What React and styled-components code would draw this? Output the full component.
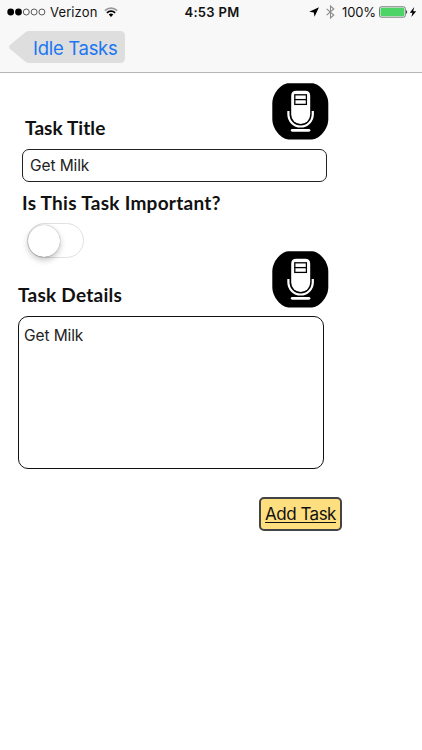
import React, { useState } from 'react'
import styled, { createGlobalStyle } from 'styled-components'

const App = () => {
  const [title, setTitle] = useState('Get Milk')
  const [details, setDetails] = useState('Get Milk')
  const [important, setImportant] = useState(false)

  return (
    <>
      <GlobalStyle />
      <Screen>
        <Header>
          <StatusBar>
            <Carrier>
              <SignalDots />
              <StatusText $spacing='0.12px'>Verizon</StatusText>
              <WifiIcon />
            </Carrier>
            <StatusText $bold $spacing='0.32px'>4:53 PM</StatusText>
            <Indicators>
              <LocationIcon />
              <BluetoothIcon />
              <StatusText $spacing='-0.1px'>100%</StatusText>
              <BatteryIcon />
            </Indicators>
          </StatusBar>
          <BackButton>
            <BackShape />
            <span>Idle Tasks</span>
          </BackButton>
        </Header>
        <Form>
          <LabelRow>
            <Label $left='25px'>Task Title</Label>
            <MicButton />
          </LabelRow>
          <TitleInput value={title} onChange={(e) => setTitle(e.target.value)} />
          <Label as='p' $left='22px' $top='8px' $spacing='0.28px'>Is This Task Important?</Label>
          <Switch $on={important} onClick={() => setImportant(!important)}>
            <Knob />
          </Switch>
          <LabelRow $top='-8px'>
            <Label $left='18px' $bottom='1px' $spacing='0.25px'>Task Details</Label>
            <MicButton />
          </LabelRow>
          <DetailsInput value={details} onChange={(e) => setDetails(e.target.value)} />
          <AddButton>Add Task</AddButton>
        </Form>
      </Screen>
    </>
  )
}

const SignalDots = () => (
  <svg width='39' height='8' viewBox='0 0 39 8'>
    <circle cx='3.7' cy='4' r='3.4' />
    <circle cx='11.5' cy='4' r='3.4' />
    {[19.3, 27.1, 34.9].map((x) => (
      <circle key={x} cx={x} cy='4' r='3' fill='none' stroke='#333' strokeWidth='0.8' />
    ))}
  </svg>
)

const WifiIcon = () => (
  <svg width='14' height='10' viewBox='0 0 14 10' fill='none' strokeWidth='1.7'>
    <path d='M0.9 3.6 A8.6 8.6 0 0 1 13.1 3.6' stroke='#999' />
    <path d='M2.9 5.9 A5.8 5.8 0 0 1 11.1 5.9' stroke='#000' />
    <path d='M4.7 7.6 A3.3 3.3 0 0 1 9.3 7.6 L7 9.9 Z' fill='#000' />
  </svg>
)

const LocationIcon = () => (
  <svg width='10' height='10' viewBox='0 0 10 10'>
    <path d='M10 0.2 L0.2 4.7 L4.8 5.4 L5.5 9.8 Z' />
  </svg>
)

const BluetoothIcon = () => (
  <svg width='9' height='14' viewBox='0 0 9 14' fill='none' stroke='#8b8b8d' strokeWidth='1.1'>
    <path d='M0.6 3.8 L7.8 10 L4.5 13 V1 L7.8 4 L0.6 10.2' />
  </svg>
)

const BatteryIcon = () => (
  <svg width='38' height='12' viewBox='0 0 38 12'>
    <rect x='0.5' y='0.8' width='25.8' height='10.4' rx='1.8' fill='#fff' stroke='#555' strokeWidth='0.8' />
    <rect x='1.5' y='1.8' width='23.8' height='8.4' rx='1' fill='#4cd566' />
    <path d='M27.1 4 A2.4 2.4 0 0 1 27.1 8 Z' fill='#333' />
    <path d='M35.2 1 L30.8 6.7 H33.4 L32.4 11 L37.2 5.2 H34.2 Z' />
  </svg>
)

const BackShape = () => (
  <svg width='117' height='33' viewBox='0 0 117 33' fill='#dedede'>
    <path d='M20 0 H111 Q116 0 116 5 V27 Q116 32 111 32 H20 Q17.5 32 15.5 30 L1 18 Q-1 16 1 14 L15.5 2 Q17.5 0 20 0 Z' />
  </svg>
)

const MicButton = () => (
  <Mic aria-label='Record'>
    <svg width='57' height='57' viewBox='0 0 57 57'>
      <path d='M16.5 0.3 H40 C46.5 0.3 56.3 9.5 56.3 20.5 V36 C56.3 47 46.5 56.4 40 56.4 H16.5 C10 56.4 0.3 47 0.3 36 V20.5 C0.3 9.5 10 0.3 16.5 0.3 Z' />
      <path d='M24.2 7.8 H33.2 Q38.2 7.8 38.2 12.8 V31.5 A9.5 9.5 0 0 1 19.2 31.5 V12.8 Q19.2 7.8 24.2 7.8 Z' fill='#fff' />
      <path d='M16.4 28 V31.3 A12 12 0 0 0 40.8 31.3 V28' fill='none' stroke='#fff' strokeWidth='2.2' />
      <rect x='22.8' y='11.8' width='11.6' height='9.6' fill='none' stroke='#000' strokeWidth='1.3' />
      <path d='M22.8 16.6 H34.4' stroke='#000' strokeWidth='1.3' />
      <path d='M20.2 47.3 H37' stroke='#fff' strokeWidth='2.7' strokeLinecap='round' />
    </svg>
  </Mic>
)

const GlobalStyle = createGlobalStyle`
  * {
    box-sizing: border-box;
  }

  body {
    margin: 0;
    background: #fff;
    font-family: Inter, 'Liberation Sans', sans-serif;
  }

  svg {
    display: block;
    flex-shrink: 0;
  }

  button {
    border: none;
    padding: 0;
    background: none;
    font-family: inherit;
    cursor: pointer;
  }
`

const Screen = styled.div`
  width: 422px;
  height: 750px;
  background: #fff;
  overflow: hidden;
`

const Header = styled.header`
  height: 73px;
  background: #f8f8f8;
  border-bottom: 1px solid #b5b5b7;
`

const StatusBar = styled.div`
  display: grid;
  grid-template-columns: 1fr auto 1fr;
  align-items: center;
  height: 24px;
  padding: 0 5px 0 7px;
`

const StatusText = styled.span`
  font-size: 13px;
  line-height: 16px;
  font-weight: ${(p) => (p.$bold ? 600 : 400)};
  letter-spacing: ${(p) => p.$spacing};
  white-space: nowrap;
  color: #111;
`

const Carrier = styled.div`
  display: flex;
  align-items: center;

  svg:first-child {
    margin-right: 4px;
  }

  svg:last-child {
    margin-left: 7px;
  }
`

const Indicators = styled.div`
  display: flex;
  align-items: center;
  justify-content: flex-end;

  svg:nth-child(2) {
    margin: 0 7px 0 7px;
  }

  svg:last-child {
    margin-left: 3px;
  }
`

const BackButton = styled.button`
  display: grid;
  align-items: center;
  margin: 7px 0 0 9px;

  svg, span {
    grid-area: 1 / 1;
  }

  span {
    padding-left: 24px;
    text-align: left;
    color: #1b76f2;
    font-size: 18.5px;
    letter-spacing: -0.3px;
  }
`

const Form = styled.main`
  display: flex;
  flex-direction: column;
  align-items: flex-start;
  padding-top: 10px;
`

const LabelRow = styled.div`
  display: flex;
  align-items: flex-end;
  justify-content: space-between;
  width: 329px;
  height: 57px;
  margin-top: ${(p) => p.$top || 0};
`

const Label = styled.label`
  margin: ${(p) => p.$top || 0} 0 ${(p) => p.$bottom || 0} ${(p) => p.$left};
  color: #111;
  font-family: Lato, sans-serif;
  font-size: 19px;
  font-weight: 700;
  line-height: 24px;
  letter-spacing: ${(p) => p.$spacing || '0.08px'};
`

const Mic = styled.button`
  width: 57px;
  height: 57px;
`

const TitleInput = styled.input`
  width: 305px;
  height: 33px;
  margin: 9px 0 1px 22px;
  padding: 0 7px;
  border: 1.5px solid #222;
  border-radius: 7px;
  background: #fff;
  color: #222;
  font-family: Inter, sans-serif;
  font-size: 15.5px;
  letter-spacing: -0.1px;
  outline: none;
`

const Switch = styled.button`
  display: flex;
  align-items: center;
  justify-content: ${(p) => (p.$on ? 'flex-end' : 'flex-start')};
  width: 57px;
  height: 35px;
  margin: 8px 0 1px 27px;
  border: 1.5px solid #e0e0e0;
  border-radius: 18px;
  background: ${(p) => (p.$on ? '#4cd566' : '#fff')};
`

const Knob = styled.span`
  width: 32px;
  height: 32px;
  border-radius: 50%;
  background: #fff;
  box-shadow: 0 0 1px rgba(0, 0, 0, 0.5), 0 3px 6px rgba(0, 0, 0, 0.24);
`

const DetailsInput = styled.textarea`
  width: 306px;
  height: 153px;
  margin: 8px 0 0 18px;
  padding: 9px 5px;
  border: 1px solid #111;
  border-radius: 10px;
  background: #fff;
  color: #222;
  font-family: Inter, sans-serif;
  font-size: 15.5px;
  line-height: 19px;
  letter-spacing: -0.1px;
  outline: none;
  resize: none;
`

const AddButton = styled.button`
  width: 83px;
  height: 34px;
  margin: 28px 0 0 259px;

  && {
    border: 2px solid #444;
    border-radius: 5px;
    background: #fedf80;
  }

  color: #111;
  font-size: 17px;
  letter-spacing: -0.5px;
  text-decoration: underline;
  text-decoration-thickness: 1px;
  text-underline-offset: 2px;
  white-space: nowrap;
`

export default App
